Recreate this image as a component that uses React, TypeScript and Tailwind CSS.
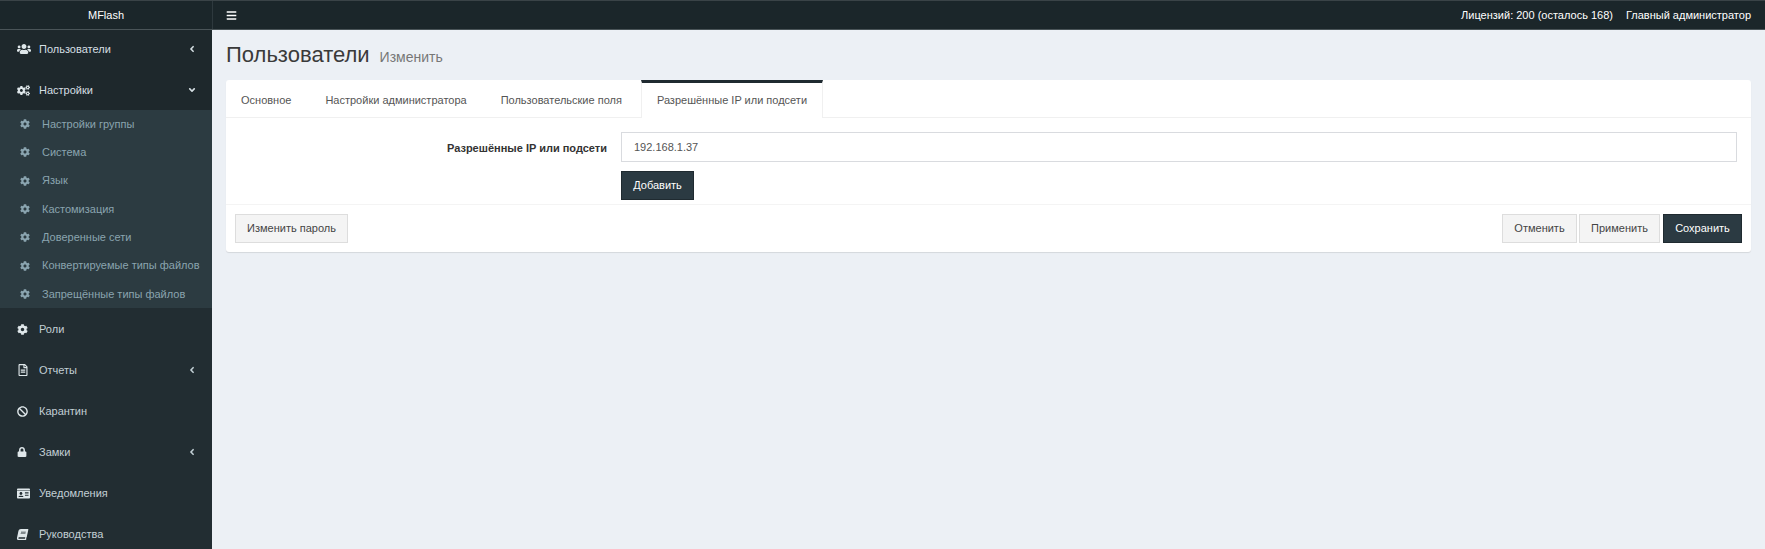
import React from "react";
import { FaUsers, FaCogs, FaCog, FaRegFileAlt, FaBan, FaLock, FaIdCard, FaBook, FaBars, FaAngleLeft, FaAngleDown } from "react-icons/fa";

const subs = ["Настройки группы", "Система", "Язык", "Кастомизация", "Доверенные сети", "Конвертируемые типы файлов", "Запрещённые типы файлов"];

function Item({ icon, label, arrow, active, first }: { icon: React.ReactNode; label: string; arrow?: "left" | "down"; active?: boolean; first?: boolean }) {
  return (
    <div className={`flex items-center pl-[17px] pr-[15px] text-[11px] ${first ? "h-[39px] pb-[1px]" : "h-[41px] pt-[1px]"} ${active ? "bg-[#1e282c] text-[#d5dfe3]" : "text-[#c2cfd5]"}`}>
      <span className="flex w-[22px] shrink-0 items-center text-[13px] text-[#dfe7ea]">{icon}</span>
      <span className="flex-1 truncate">{label}</span>
      {arrow === "left" && <FaAngleLeft className="text-[10px]" />}
      {arrow === "down" && <FaAngleDown className="text-[10px]" />}
    </div>
  );
}

export default function App() {
  return (
    <div className="flex h-[549px] w-full flex-col overflow-hidden bg-[#ecf0f5] text-[11px] font-['Liberation_Sans','Roboto',sans-serif]">
      <header className="flex h-[30px] shrink-0 border-y border-t-[#3a4347] border-b-[#4a5458] bg-[#1b262a] text-white">
        <div className="flex w-[212px] items-center justify-center">MFlash</div>
        <div className="flex flex-1 items-center justify-between border-l border-[#2e393e] pl-[13px] pr-[14px]">
          <FaBars className="text-[11px]" />
          <div className="flex gap-[13px] text-white">
            <span>Лицензий: 200 (осталось 168)</span>
            <span>Главный администратор</span>
          </div>
        </div>
      </header>
      <div className="flex min-h-0 flex-1">
        <aside className="w-[212px] shrink-0 overflow-hidden bg-[#222d32]">
          <Item first icon={<FaUsers className="text-[14px]" />} label="Пользователи" arrow="left" active />
          <Item icon={<FaCogs />} label="Настройки" arrow="down" active />
          <div className="flex h-[198px] flex-col bg-[#2c3b41]">
            {subs.map((s) => (
              <div key={s} className="flex flex-1 items-center pl-[20px] text-[11px] text-[#8aa4af]">
                <span className="flex w-[22px] shrink-0 items-center text-[10px]"><FaCog /></span>
                <span className="whitespace-nowrap">{s}</span>
              </div>
            ))}
          </div>
          <Item icon={<FaCog className="text-[11px]" />} label="Роли" />
          <Item icon={<FaRegFileAlt className="text-[12px]" />} label="Отчеты" arrow="left" />
          <Item icon={<FaBan className="text-[11px]" />} label="Карантин" />
          <Item icon={<FaLock className="text-[10px]" />} label="Замки" arrow="left" />
          <Item icon={<FaIdCard />} label="Уведомления" />
          <Item icon={<FaBook className="-skew-x-12 text-[11px]" />} label="Руководства" />
        </aside>
        <main className="flex-1 px-[14px]">
          <div className="flex h-[50px] items-baseline pt-[10px]">
            <h1 className="text-[22px] font-normal leading-[30px] text-[#3a3a3a]">Пользователи</h1>
            <span className="ml-[10px] text-[14px] text-[#777]">Изменить</span>
          </div>
          <section className="rounded-[3px] bg-white shadow-[0_1px_1px_rgba(0,0,0,0.1)]">
            <nav className="flex h-[38px] border-b border-[#f0f0f0] text-[#555]">
              <div className="flex items-center border-t-[3px] border-transparent px-[15px]">Основное</div>
              <div className="flex items-center border-t-[3px] border-transparent px-[19px]">Настройки администратора</div>
              <div className="flex items-center border-t-[3px] border-transparent pl-[15px] pr-[19px]">Пользовательские поля</div>
              <div className="-mb-px flex items-center border-x border-t-[3px] border-x-[#f0f0f0] border-t-[#1f2a30] bg-white px-[15px]">Разрешённые IP или подсети</div>
            </nav>
            <div className="flex gap-[14px] pl-[14px] pr-[14px] pt-[14px] pb-[4px]">
              <label className="w-[367px] pt-[8px] text-right font-bold text-[#333]">Разрешённые IP или подсети</label>
              <div className="flex flex-1 flex-col items-start gap-[9px]">
                <div className="flex h-[30px] w-full items-center border border-[#d9dbdf] px-[12px] text-[#555]">192.168.1.37</div>
                <button className="h-[29px] w-[73px] border border-[#1f2a30] bg-[#2b3a42] text-white">Добавить</button>
              </div>
            </div>
            <footer className="flex justify-between border-t border-[#f4f4f4] px-[9px] py-[9px]">
              <button className="h-[29px] w-[113px] border border-[#ddd] bg-[#f4f4f4] text-[#444]">Изменить пароль</button>
              <div className="flex gap-[2px]">
                <button className="h-[29px] w-[75px] border border-[#ddd] bg-[#f4f4f4] text-[#444]">Отменить</button>
                <button className="h-[29px] w-[81px] border border-[#ddd] bg-[#f4f4f4] text-[#444]">Применить</button>
                <button className="ml-[1px] h-[29px] w-[79px] border border-[#1f2a30] bg-[#2b3a42] text-white">Сохранить</button>
              </div>
            </footer>
          </section>
        </main>
      </div>
    </div>
  );
}
